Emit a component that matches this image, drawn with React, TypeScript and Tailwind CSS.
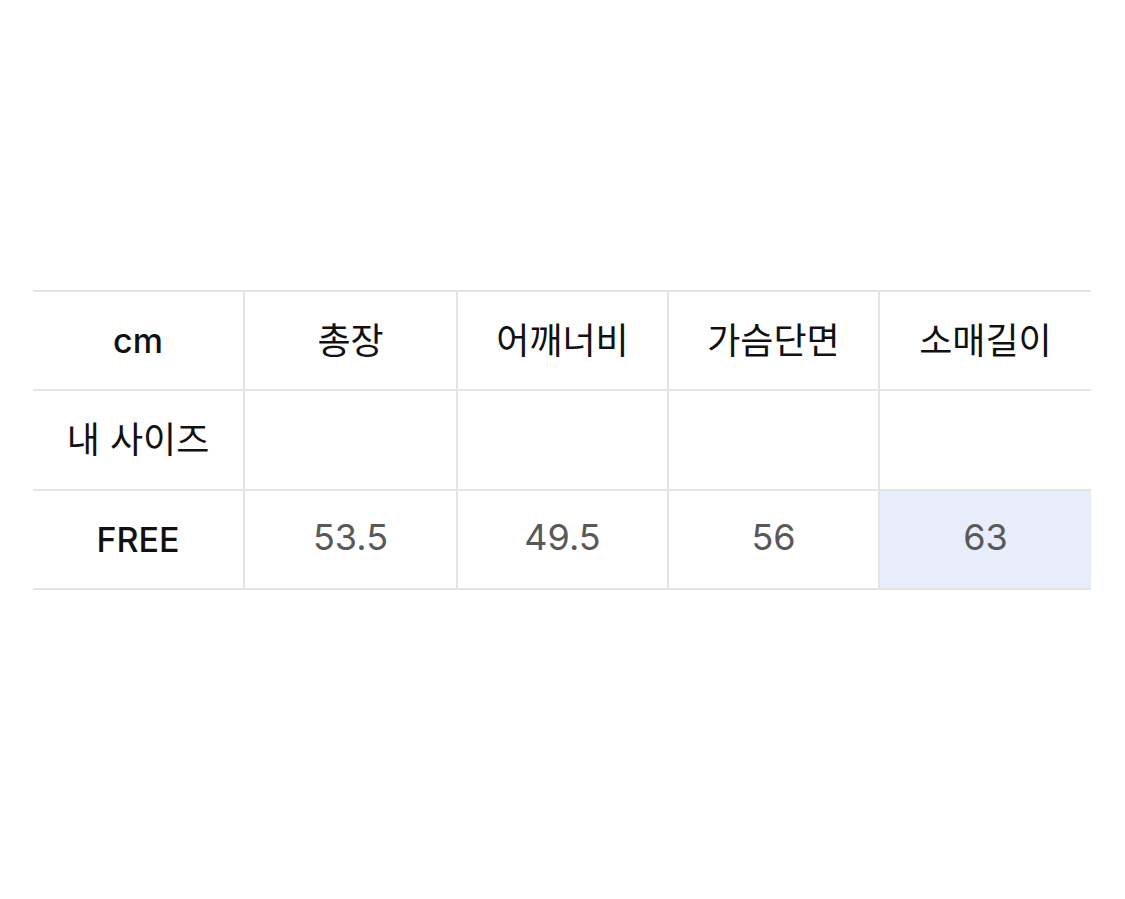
import React from "react";

const font = { fontFamily: '"Inter", "Noto Sans CJK KR", sans-serif' };

export default function App() {
  const headers = ["총장", "어깨너비", "가슴단면", "소매길이"];
  const values = ["53.5", "49.5", "56", "63"];
  const widths = ["w-[213px]", "w-[211px]", "w-[211px]", "w-[211px]"];
  return (
    <div className="w-[1125px] h-[899px] bg-white pt-[290px] pl-[33px]" style={font}>
      <div className="flex flex-col w-[1058px] border-t-2 border-[#e4e4e4]">
        {/* header row */}
        <div className="flex h-[99px]">
          <div className="w-[212px] flex items-center justify-center border-r-2 border-b-2 border-[#e4e4e4] text-[34px] font-medium text-[#111]">
            cm
          </div>
          {headers.map((h, i) => (
            <div
              key={h}
              className={`${widths[i]} flex items-center justify-center border-b-2 border-[#e4e4e4] text-[36px] text-[#111] ${i < 3 ? "border-r-2" : ""}`}
            >
              {h}
            </div>
          ))}
        </div>
        {/* my size row */}
        <div className="flex h-[100px]">
          <div className="w-[212px] flex items-center justify-center border-r-2 border-b-2 border-[#e4e4e4] text-[36px] text-[#111]">
            내 사이즈
          </div>
          {headers.map((h, i) => (
            <div
              key={h}
              className={`${widths[i]} border-b-2 border-[#e4e4e4] ${i < 3 ? "border-r-2" : ""}`}
            />
          ))}
        </div>
        {/* FREE row */}
        <div className="flex h-[99px]">
          <div className="w-[212px] flex items-center justify-center border-r-2 border-b-2 border-[#e4e4e4] text-[34px] font-medium text-[#111]">
            FREE
          </div>
          {values.map((v, i) => (
            <div
              key={v}
              className={`${widths[i]} flex items-center justify-center pb-[6px] border-b-2 border-[#e4e4e4] text-[36px] text-[#595959] ${i < 3 ? "border-r-2" : "bg-[#e8edfb]"}`}
            >
              {v}
            </div>
          ))}
        </div>
      </div>
    </div>
  );
}
